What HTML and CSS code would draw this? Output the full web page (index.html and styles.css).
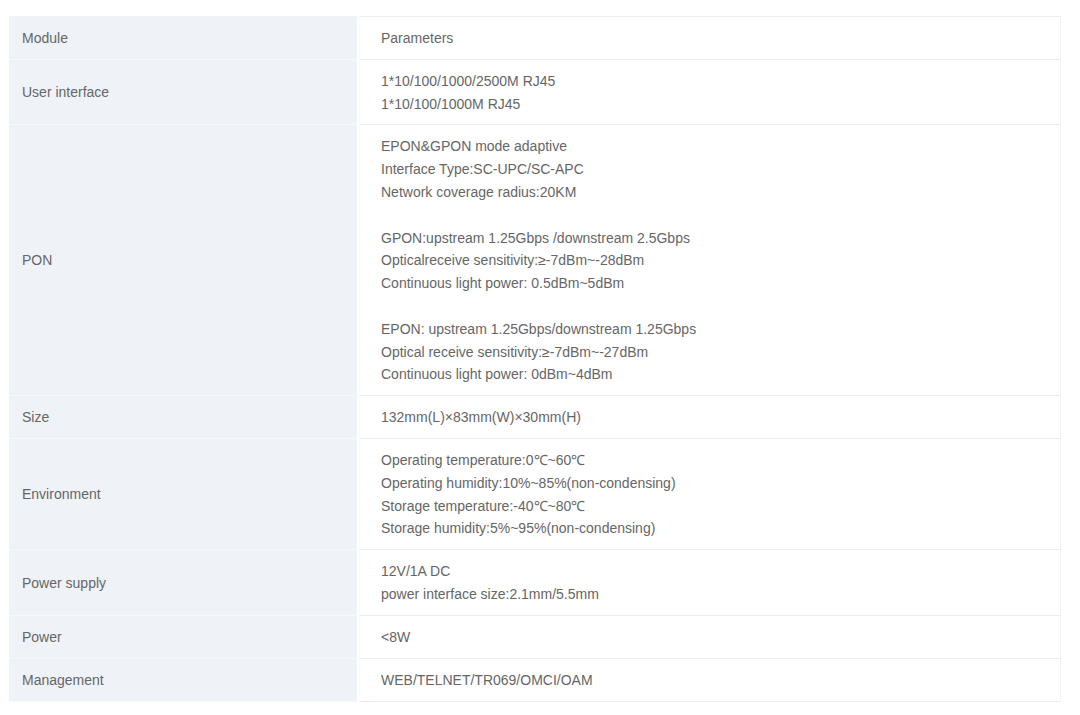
FILE: index.html
```html
<!DOCTYPE html>
<html>
<head>
<meta charset="utf-8">
<link rel="stylesheet" href="styles.css">
</head>
<body>
<table class="spec">
  <tr><td class="key">Module</td><td class="val first">Parameters</td></tr>
  <tr><td class="key">User interface</td><td class="val">1*10/100/1000/2500M RJ45<br>1*10/100/1000M RJ45</td></tr>
  <tr><td class="key">PON</td><td class="val">
    <p class="grp">EPON&amp;GPON mode adaptive<br>Interface Type:SC-UPC/SC-APC<br>Network coverage radius:20KM</p>
    <p class="grp">GPON:upstream 1.25Gbps /downstream 2.5Gbps<br>Opticalreceive sensitivity:≥-7dBm~-28dBm<br>Continuous light power: 0.5dBm~5dBm</p>
    <p class="grp">EPON: upstream 1.25Gbps/downstream 1.25Gbps<br>Optical receive sensitivity:≥-7dBm~-27dBm<br>Continuous light power: 0dBm~4dBm</p>
  </td></tr>
  <tr><td class="key">Size</td><td class="val">132mm(L)×83mm(W)×30mm(H)</td></tr>
  <tr><td class="key">Environment</td><td class="val">Operating temperature:0℃~60℃<br>Operating humidity:10%~85%(non-condensing)<br>Storage temperature:-40℃~80℃<br>Storage humidity:5%~95%(non-condensing)</td></tr>
  <tr><td class="key">Power supply</td><td class="val">12V/1A DC<br>power interface size:2.1mm/5.5mm</td></tr>
  <tr><td class="key">Power</td><td class="val">&lt;8W</td></tr>
  <tr><td class="key">Management</td><td class="val">WEB/TELNET/TR069/OMCI/OAM</td></tr>
</table>
</body>
</html>
```
FILE: styles.css
```css
html, body {
  margin: 0;
  padding: 0;
  background: #ffffff;
}
body {
  padding: 16px 0 0 9px;
  font-family: "Liberation Sans", Arial, sans-serif;
  font-size: 14px;
  color: #666666;
}
.spec {
  border-collapse: separate;
  border-spacing: 0;
  width: 1052px;
}
.spec td {
  vertical-align: middle;
  line-height: 22.8px;
  padding: 10px 0 9px;
}
.key {
  width: 335px;
  padding-left: 13px !important;
  background: #eff3f8;
  border-bottom: 1px solid #f7f9fb;
  border-right: 2px solid #ffffff;
}
.val {
  padding-left: 21px !important;
  border-bottom: 1px solid #ececec;
  border-right: 1px solid #f3f3f3;
  border-left: 1px solid #fafafa;
}
.val.first {
  border-top: 1px solid #ededed;
}
.spec tr:first-child .key {
  border-top: 1px solid #eff3f8;
}
.spec tr:last-child td {
  padding-bottom: 10px;
}
.grp {
  margin: 0;
}
.grp + .grp {
  margin-top: 22.8px;
}
```
